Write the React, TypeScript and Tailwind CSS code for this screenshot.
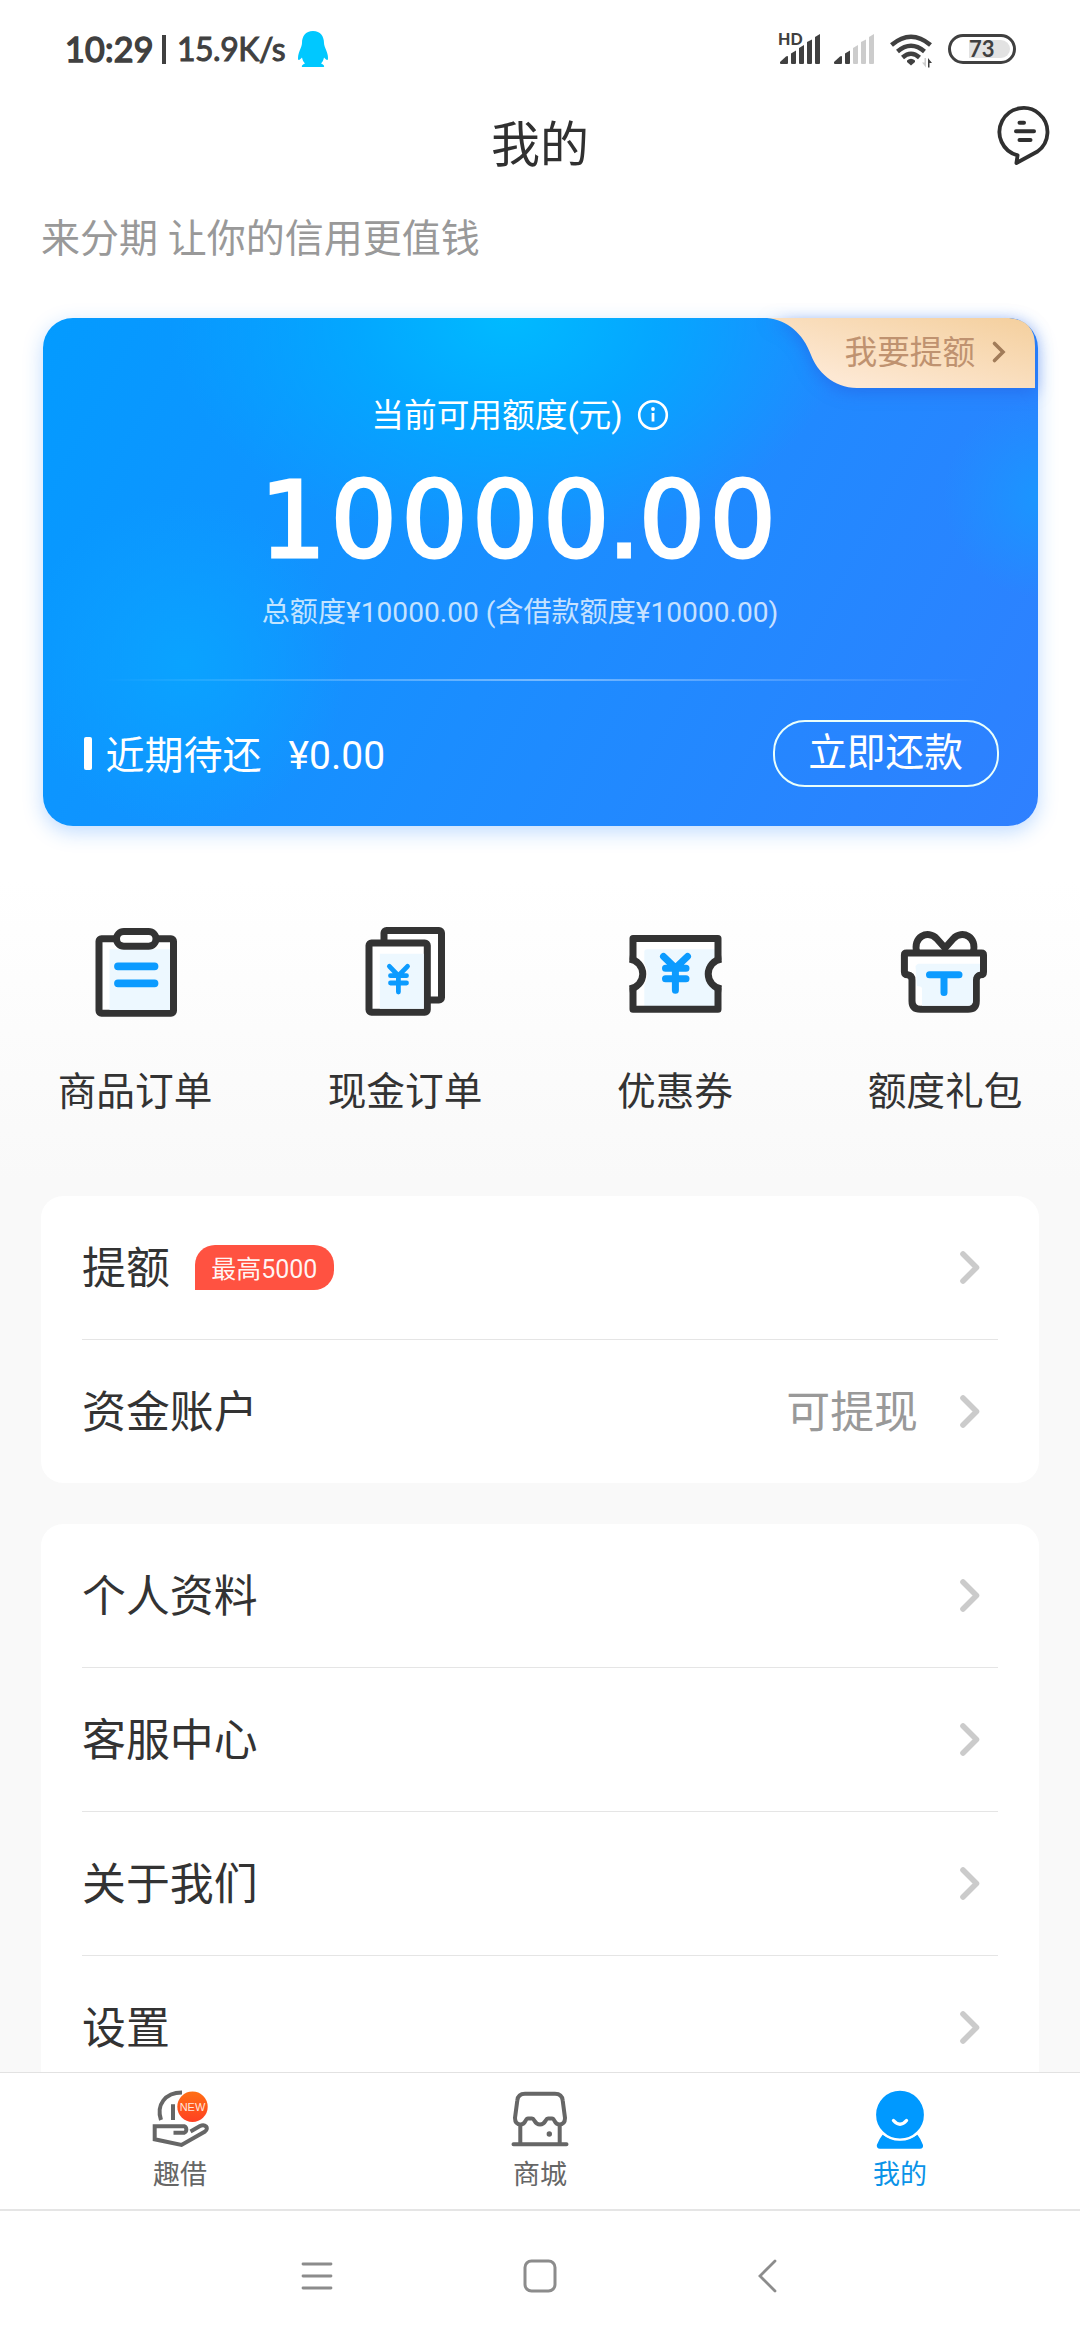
import type { ReactNode } from 'react';

interface Row {
  label: string;
  badge?: string;
  value?: string;
}

const accountRows: Row[] = [
  { label: '提额', badge: '最高5000' },
  { label: '资金账户', value: '可提现' },
];

const settingRows: Row[] = [
  { label: '个人资料' },
  { label: '客服中心' },
  { label: '关于我们' },
  { label: '设置' },
];

function Signal({ level }: { level: number }) {
  const bars = [
    'M0 28 L6 22.500 Q8 21.500 8 23 V29 Q8 30 7 30 H1 Q0 30 0 29Z',
    'M11 19.500 L16 16.500 V29 Q16 30 15 30 H12 Q11 30 11 29Z',
    'M19 14 L24 11 V29 Q24 30 23 30 H20 Q19 30 19 29Z',
    'M27 8 L32 5.500 V29 Q32 30 31 30 H28 Q27 30 27 29Z',
    'M35 3 L40 0 V29 Q40 30 39 30 H36 Q35 30 35 29Z',
  ];
  return (
    <svg className="w-[40px] h-[30px]" viewBox="0 0 40 30">
      {bars.map((d, i) => (
        <path key={d} d={d} fill={i < level ? '#404040' : '#cccccc'} />
      ))}
    </svg>
  );
}

function StatusBar() {
  return (
    <div className="h-24 shrink-0 flex items-center justify-between pl-[65px] pr-[64px] pt-[2px] text-[#404040]">
      <div className="flex items-center font-['Lato','Noto_Sans',sans-serif]">
        <span className="w-[86px] text-[34px] leading-none tracking-[0.300px] whitespace-nowrap [-webkit-text-stroke:1.500px_#404040]">
          10:29
        </span>
        <span className="ml-[11px] w-[4px] h-[29px] bg-[#404040]" />
        <span className="ml-[11px] w-[110px] text-[32px] leading-none tracking-[-0.500px] whitespace-nowrap [-webkit-text-stroke:1px_#404040]">
          15.9K/s
        </span>
        <svg className="ml-[10px] w-[32px] h-[38px]" viewBox="0 0 32 38">
          <path
            d="M16 1 C8.500 1 5 6.500 5 13 C5 17 1 22 1 28 C1 31 2.500 30.500 5 27.500 C5.500 30 6.500 32 8 33.500 C4.500 35 4 37 6 37 H26 C28 37 27.500 35 24 33.500 C25.500 32 26.500 30 27 27.500 C29.500 30.500 31 31 31 28 C31 22 27 17 27 13 C27 6.500 23.500 1 16 1Z"
            fill="#00c8ff"
          />
        </svg>
      </div>
      <div className="flex items-center">
        <div className="relative flex">
          <Signal level={5} />
          <span className="absolute -left-[2px] -top-[2px] font-['Lato',sans-serif] text-[16px] leading-[14px] font-black">
            HD
          </span>
        </div>
        <div className="ml-[14px] flex">
          <Signal level={2} />
        </div>
        <svg className="ml-[16px] w-[43px] h-[34px] mt-[3px]" viewBox="0 0 43 34">
          <g fill="none" stroke="#404040" strokeWidth="4.500">
            <path d="M1.500 11 Q21 -5.500 40.500 11" />
            <path d="M7.500 17.500 Q21 6 34.500 17.500" />
            <path d="M12.500 23.500 Q21 16 29.500 23.500" />
          </g>
          <path d="M17 26.500 Q21 23 25 26.500 V28 L21 31.500 L17 28Z" fill="#404040" />
          <path d="M36 24 V33.500 L32 28.500 H34.500 V24Z" fill="#cccccc" />
          <path d="M38 33.500 V24 L42 29 H39.500 V33.500Z" fill="#404040" />
        </svg>
        <div className="ml-[15px] w-[68px] h-[30px] rounded-full border-[3px] border-[#404040] p-[3px] flex">
          <div className="relative ml-[15px] flex-1 rounded-r-full bg-[#e2e2e2]">
            <span className="absolute left-0 -top-[1px] font-['Lato',sans-serif] text-[22px] leading-[20px] font-bold">
              73
            </span>
          </div>
        </div>
      </div>
    </div>
  );
}

function Header() {
  return (
    <div className="h-24 shrink-0 grid grid-cols-3 items-center">
      <span />
      <h1 className="pt-[2px] text-center text-[49px] leading-none text-[#303030]">我的</h1>
      <svg className="justify-self-end mr-[27px] mt-[-16px] w-[60px] h-[68px]" viewBox="0 0 60 68">
        <g fill="none" stroke="#303030" strokeLinecap="round" strokeLinejoin="round">
          <path strokeWidth="3.800" d="M24.600 53.300 A24 24 0 1 1 44.500 49.500 L23.400 61 Z" />
          <path strokeWidth="4" d="M26.500 20.700 H31 M23 29.300 H41 M26.500 38 H37.500" />
        </g>
      </svg>
    </div>
  );
}

function CreditCard() {
  return (
    <div className="relative mx-auto w-[995px] h-[508px] shrink-0 rounded-[30px] shadow-[0_6px_20px_rgba(30,130,255,0.28)] text-white flex flex-col items-center bg-[radial-gradient(circle_at_1000px_180px,#1a96ff_0px,#1a96ff00_100px),radial-gradient(circle_at_140px_345px,#0aa3ff_0px,#0aa3ff00_165px),radial-gradient(ellipse_340px_230px_at_465px_0px,#00baff_0%,#00acffcc_45%,#00a0ff00_100%),linear-gradient(118deg,#039bff_0%,#1b8dff_50%,#2f80ff_100%)]">
      {/* Raise-limit tab */}
      <div className="absolute right-[3px] top-0 w-[268px] h-[70px]">
        <svg className="absolute inset-0 w-full h-full overflow-visible drop-shadow-[0_4px_8px_rgba(40,90,220,0.5)]" viewBox="0 0 268 70">
          <defs>
            <linearGradient id="tab" x1="0" y1="1" x2="1" y2="0">
              <stop offset="0.200" stopColor="#fde8d3" />
              <stop offset="1" stopColor="#f4cf9d" />
            </linearGradient>
          </defs>
          <path d="M0 0 H242 Q268 2 268 28 V70 H90 C66 70 50 53 44 37 C36 15 20 2 0 0Z" fill="url(#tab)" />
        </svg>
        <div className="relative h-full pl-[78px] flex items-center text-[#bf9270]">
          <span className="text-[32.700px] leading-[48px] -mt-[1px] whitespace-nowrap">我要提额</span>
          <svg className="ml-[16px] -mt-[3px] w-[16px] h-[24px]" viewBox="0 0 16 24">
            <path d="M3.500 3.500 L12 12 L3.500 20.500" fill="none" stroke="#a17c59" strokeWidth="3.600" strokeLinecap="round" />
          </svg>
        </div>
      </div>

      {/* Limit summary sits a little left of the card's centre */}
      <div className="w-full pr-[40px] flex flex-col items-center">
        <div className="mt-[73px] h-12 flex items-center">
          <span className="pt-[2px] text-[32.700px] leading-[48px]">当前可用额度(元)</span>
          <svg className="ml-[14px] w-[32px] h-[32px]" viewBox="0 0 32 32">
            <circle cx="16" cy="16" r="13.800" fill="none" stroke="currentColor" strokeWidth="2.600" />
            <circle cx="16" cy="10" r="1.900" fill="currentColor" />
            <path d="M16 14 V22.500" stroke="currentColor" strokeWidth="2.800" />
          </svg>
        </div>
        <div className="mt-[27px] h-[110px] font-['DejaVu_Sans',sans-serif] text-[104.500px] leading-[110px] tracking-[4.300px] whitespace-nowrap [-webkit-text-stroke:3px_white]">
          1000<span className="tracking-[-2px]">0.</span>00
        </div>
        <p className="mt-[13px] text-[28.100px] leading-[48px] text-white/75 whitespace-nowrap">
          总额度¥10000.00 (含借款额度¥10000.00)
        </p>
      </div>
      <div className="mt-[42px] h-[2px] w-[880px] bg-linear-to-r from-white/0 via-white/40 to-white/0" />
      <div className="w-full mt-[38px] pl-[41px] pr-[39px] h-[68px] flex items-center">
        <span className="w-2 h-[33px] rounded-[2px] bg-white" />
        <span className="ml-[14px] mt-[5px] text-[39px] leading-[60px]">近期待还</span>
        <span className="ml-[27px] mt-[5px] text-[39px] leading-[60px]">¥0.00</span>
        <button className="ml-auto w-[226px] h-[67px] rounded-[32px] border-2 border-[#eafffb] text-[38.700px] leading-[56px] pb-[1px]">
          立即还款
        </button>
      </div>
    </div>
  );
}

const INK = '#333333';
const BLUE = '#0c9bff';
const TINT = '#edf8ff';

function OrderIcon() {
  return (
    <>
      <rect x="14" y="13.800" width="74.500" height="74.500" rx="2.500" fill="#fff" stroke={INK} strokeWidth="7" />
      <path d="M24.500 24.300 H85 V85 H24.500Z" fill={TINT} />
      <rect x="31.500" y="6.500" width="39.500" height="14.700" rx="7.350" fill="#fff" stroke={INK} strokeWidth="7" />
      <path d="M33 41.300 H69.500 M33 58.300 H69.500" stroke={BLUE} strokeWidth="7.800" strokeLinecap="round" />
    </>
  );
}

function CashIcon() {
  return (
    <>
      <rect x="29" y="5.400" width="57.500" height="69.600" rx="2.500" fill="#fff" stroke={INK} strokeWidth="7" />
      <rect x="14" y="18" width="58.300" height="69.300" rx="2.500" fill="#fff" stroke={INK} strokeWidth="7" />
      <path d="M24.800 28.700 H68.800 V83.800 H24.800Z" fill={TINT} />
      <path
        d="M34.400 41.300 L43.400 50.700 L52.500 41.300 M35.500 50.700 H51.500 M35.500 58 H51.500 M43.400 50.700 V67"
        fill="none"
        stroke={BLUE}
        strokeWidth="4.800"
        strokeLinecap="round"
      />
    </>
  );
}

function CouponIcon() {
  const outline = 'M8 34.700 V13.400 H93 V34.700 M93 63.300 V84.300 H8 V63.300';
  return (
    <>
      <path d="M8 13.400 H93 V34.700 A15 15 0 0 0 93 63.300 V84.300 H8 V63.300 A15 15 0 0 0 8 34.700Z" fill="#fff" />
      <path d="M22 24.300 H90 V36 A15 15 0 0 0 90 62 V81 H19.300 V60 Q26 49 19.300 38 V27 Q19.300 24.300 22 24.300Z" fill={TINT} />
      <g stroke={INK} strokeWidth="7" strokeLinejoin="round">
        <path d={outline} />
        <path d="M4.500 34.100 A15 15 0 0 1 4.500 63.900 M96.500 34.100 A15 15 0 0 0 96.500 63.900" />
      </g>
      <path
        d="M38.500 31.500 L50.400 43 L62.500 31.500 M40.500 43.300 H61 M40.500 53.700 H61 M50.400 43 V65.300"
        stroke={BLUE}
        strokeWidth="7"
        strokeLinecap="round"
      />
    </>
  );
}

function GiftIcon() {
  return (
    <>
      <path
        d="M22 28 C17 12 33 4 42 14 L50 23 L58 14 C67 4 83 12 78 28"
        fill="#fff"
        stroke={INK}
        strokeWidth="7"
        strokeLinejoin="round"
      />
      <path
        d="M11.500 28 H86.500 Q88.500 28 88.500 30 V47 Q88.500 49.800 85.500 49.800 Q81.300 50.500 81.300 55 V76 Q81.300 84.300 73 84.300 H25.500 Q17 84.300 17 76 V55 Q17 50.500 12.500 49.800 Q9.400 49.800 9.400 47 V30 Q9.400 28 11.500 28Z"
        fill="#fff"
        stroke={INK}
        strokeWidth="7"
      />
      <path d="M23 38.800 H85 V46.500 Q78 48 78 55 V76 Q77.500 80.800 73 80.800 H27 V63 Q26 61 22 61 L20.500 41 Z" fill={TINT} />
      <path d="M34.500 49.700 H64 M49 49.700 V67.500" stroke={BLUE} strokeWidth="7" strokeLinecap="round" />
    </>
  );
}

const shortcuts: { label: string; icon: ReactNode }[] = [
  { label: '商品订单', icon: <OrderIcon /> },
  { label: '现金订单', icon: <CashIcon /> },
  { label: '优惠券', icon: <CouponIcon /> },
  { label: '额度礼包', icon: <GiftIcon /> },
];

function ListCard({ rows }: { rows: Row[] }) {
  return (
    <div className="mx-[41px] px-[41px] shrink-0 rounded-[22px] bg-white divide-y divide-[#e5e5e5]">
      {rows.map((row) => (
        <div key={row.label} className="h-36 last:h-[143px] flex items-center pr-[14px] text-[43.900px] leading-none text-[#333]">
          <span className="pt-[4px]">{row.label}</span>
          {row.badge && (
            <span className="ml-[25px] w-[139px] h-[45px] rounded-[20px] rounded-bl-none bg-[#ff5241] text-white/95 text-[25px] leading-[49px] text-center">
              {row.badge}
            </span>
          )}
          <span className="ml-auto pt-[4px] text-[#999]">{row.value}</span>
          <svg className="ml-[38px] w-[28px] h-[36px]" viewBox="0 0 28 36">
            <path d="M7 4 L20.500 17.500 L7 31" fill="none" stroke="#cbcbcb" strokeWidth="5.600" strokeLinecap="round" strokeLinejoin="round" />
          </svg>
        </div>
      ))}
    </div>
  );
}

function TabBar() {
  return (
    <div className="h-[137px] shrink-0 border-t border-[#e2e2e2] bg-white grid grid-cols-3 text-[27px] leading-[40px] text-[#666]">
      <div className="flex flex-col items-center pt-[13px]">
        <svg className="w-16 h-16" viewBox="0 0 64 64">
          <defs>
            <linearGradient id="new" x1="0" y1="0" x2="0" y2="1">
              <stop offset="0" stopColor="#ff6f14" />
              <stop offset="1" stopColor="#ff4022" />
            </linearGradient>
          </defs>
          <g fill="none" stroke="#666" strokeWidth="4">
            <path d="M13 34 C8 19 17 6.500 34 6.500 M25 18.300 V34" />
            <path d="M25.500 46.800 H36 A3.500 3.500 0 0 0 36 40.200 H6.700 V53.300 L33.500 59 L57 45.500 C61.500 42 57 37.500 52 40 L42.500 45.500" />
          </g>
          <circle cx="44.500" cy="20.700" r="15.200" fill="url(#new)" />
          <text x="44.500" y="24.600" textAnchor="middle" fontSize="11" fill="#ffe6dc" className="font-['Liberation_Sans',sans-serif]">
            NEW
          </text>
        </svg>
        <span className="mt-[5px]">趣借</span>
      </div>
      <div className="flex flex-col items-center pt-[13px]">
        <svg className="w-16 h-16" viewBox="0 0 64 64" fill="none" stroke="#666" strokeWidth="4" strokeLinecap="round">
          <path d="M17 7.700 H47 Q54 7.700 54.700 14.500 L57 32 Q57 38.500 51 38.500 C46 38 47 32.500 44 32.500 H40 C37 32.500 38 38.500 32 38.500 C26 38.500 27 32.500 24 32.500 H20 C17 32.500 18 38 13 38.500 Q7 38.500 7 32 L9.300 14.500 Q10 7.700 17 7.700Z" />
          <path d="M12.300 39 V58 M51.700 39 V58 M5.500 58.300 H58.500" />
          <circle cx="41.300" cy="48" r="2.700" fill="#666" stroke="none" />
        </svg>
        <span className="mt-[5px]">商城</span>
      </div>
      <div className="flex flex-col items-center pt-[13px] text-[#0a93e8]">
        <svg className="w-16 h-16" viewBox="0 0 64 64">
          <path d="M14.600 48.700 Q32 60 49.400 48.700 Q53 53 55 59 Q55.500 62.700 52 62.700 H12 Q8.500 62.700 8.800 59 Q11 53 14.600 48.700Z" fill="#0099ff" />
          <circle cx="32" cy="28.700" r="25" fill="#0099ff" stroke="#fff" strokeWidth="2.200" />
          <path d="M25.500 34.500 Q32 42 38.500 34.500" fill="none" stroke="#fff" strokeWidth="3.400" strokeLinecap="round" />
        </svg>
        <span className="mt-[5px]">我的</span>
      </div>
    </div>
  );
}

function SystemNav() {
  return (
    <div className="h-[131px] shrink-0 border-t-2 border-[#e5e5e5] bg-white flex items-center justify-center">
      <svg className="w-[36px] h-[36px]" viewBox="0 0 36 36">
        <path d="M4 6 H32 M4 18 H32 M4 30 H32" stroke="#8c8c8c" strokeWidth="2.800" strokeLinecap="round" />
      </svg>
      <svg className="ml-[187px] w-[36px] h-[36px]" viewBox="0 0 36 36">
        <rect x="3" y="3" width="30" height="30" rx="6.500" fill="none" stroke="#8c8c8c" strokeWidth="3" />
      </svg>
      <svg className="ml-[191px] -mr-[4px] w-[36px] h-[36px]" viewBox="0 0 36 36">
        <path d="M26 3 L11 18 L26 33" fill="none" stroke="#8c8c8c" strokeWidth="2.800" strokeLinecap="round" />
      </svg>
    </div>
  );
}

export default function App() {
  return (
    <div className="w-[1080px] h-[2340px] overflow-hidden flex flex-col bg-white font-['Roboto','Noto_Sans_CJK_SC',sans-serif]">
      <div className="flex-1 min-h-0 overflow-hidden flex flex-col bg-[linear-gradient(to_bottom,#ffffff_880px,#f9f9f9_1180px)]">
        <StatusBar />
        <Header />
        <p className="h-[91px] shrink-0 pl-[41px] pt-[2px] text-[39px] leading-[91px] text-[#999]">来分期 让你的信用更值钱</p>
        <div className="h-[35px] shrink-0" />
        <CreditCard />
        <div className="mt-[99px] h-[271px] shrink-0 grid grid-cols-4">
          {shortcuts.map((s) => (
            <div key={s.label} className="flex flex-col items-center">
              <svg className="w-[100px] h-[100px]" viewBox="0 0 100 100" fill="none">
                {s.icon}
              </svg>
              <span className="mt-[37px] text-[38.700px] leading-[60px] text-[#333]">{s.label}</span>
            </div>
          ))}
        </div>
        <ListCard rows={accountRows} />
        <div className="h-[41px] shrink-0" />
        <ListCard rows={settingRows} />
      </div>
      <TabBar />
      <SystemNav />
    </div>
  );
}
